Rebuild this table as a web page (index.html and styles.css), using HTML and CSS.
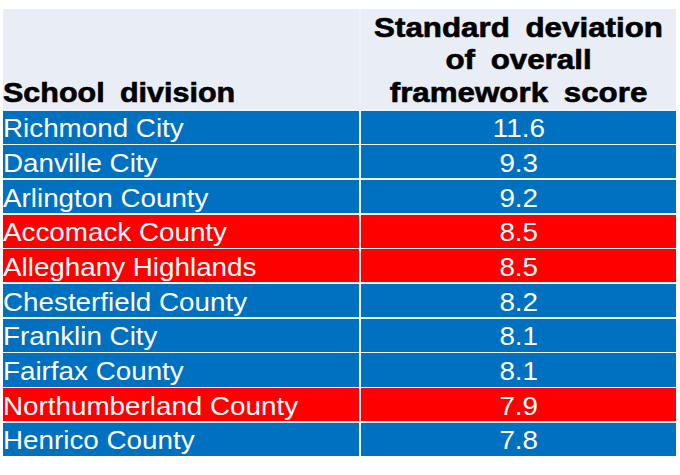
FILE: index.html
```html
<!DOCTYPE html>
<html>
<head>
<meta charset="utf-8">
<link rel="stylesheet" href="styles.css">
</head>
<body>
<div class="table">
  <div class="cell head head-left"><span class="hx">School division</span></div>
  <div class="cell head head-right"><span class="hx">Standard deviation<br>of overall<br>framework score</span></div>

  <div class="cell name blue"><span class="tx">Richmond City</span></div>
  <div class="cell val blue"><span class="tx">11.6</span></div>

  <div class="cell name blue"><span class="tx">Danville City</span></div>
  <div class="cell val blue"><span class="tx">9.3</span></div>

  <div class="cell name blue"><span class="tx">Arlington County</span></div>
  <div class="cell val blue"><span class="tx">9.2</span></div>

  <div class="cell name red"><span class="tx">Accomack County</span></div>
  <div class="cell val red"><span class="tx">8.5</span></div>

  <div class="cell name red"><span class="tx">Alleghany Highlands</span></div>
  <div class="cell val red"><span class="tx">8.5</span></div>

  <div class="cell name blue"><span class="tx">Chesterfield County</span></div>
  <div class="cell val blue"><span class="tx">8.2</span></div>

  <div class="cell name blue"><span class="tx">Franklin City</span></div>
  <div class="cell val blue"><span class="tx">8.1</span></div>

  <div class="cell name blue"><span class="tx">Fairfax County</span></div>
  <div class="cell val blue"><span class="tx">8.1</span></div>

  <div class="cell name red"><span class="tx">Northumberland County</span></div>
  <div class="cell val red"><span class="tx">7.9</span></div>

  <div class="cell name blue"><span class="tx">Henrico County</span></div>
  <div class="cell val blue"><span class="tx">7.8</span></div>
</div>
</body>
</html>
```

FILE: styles.css
```css
html, body {
  margin: 0;
  background: #ffffff;
}

body {
  padding: 9px 4px 0 3px;
  font-family: "Liberation Sans", Arial, sans-serif;
}

.table {
  display: grid;
  width: 673px;
  grid-template-columns: 356px 315px;
  grid-template-rows: 100px;
  grid-auto-rows: 33.1px;
  gap: 1.6px 2px;
  background: #eef3f9;
}

.cell {
  white-space: nowrap;
  overflow: visible;
}

.head {
  background: #e9edf5;
  display: flex;
  align-items: flex-end;
  font-weight: 700;
  font-size: 27px;
  line-height: 32.5px;
  color: #000000;
  -webkit-text-stroke: 0.6px #000000;
}

.head-right {
  justify-content: center;
  text-align: center;
}

.hx {
  display: inline-block;
  transform: scaleX(1.13);
  transform-origin: left bottom;
  word-spacing: 6px;
}

.head-right .hx {
  transform: scaleX(1.16);
  transform-origin: center bottom;
}

.name, .val {
  display: flex;
  align-items: center;
  color: #ffffff;
  font-size: 25.5px;
  line-height: 33px;
  padding-top: 3px;
  box-sizing: border-box;
}

.val {
  justify-content: center;
}

.tx {
  display: inline-block;
  transform: scaleX(1.09);
  transform-origin: left center;
}

.val .tx {
  transform-origin: center center;
}

.blue {
  background: #0070c0;
}

.red {
  background: #ff0000;
}
```
